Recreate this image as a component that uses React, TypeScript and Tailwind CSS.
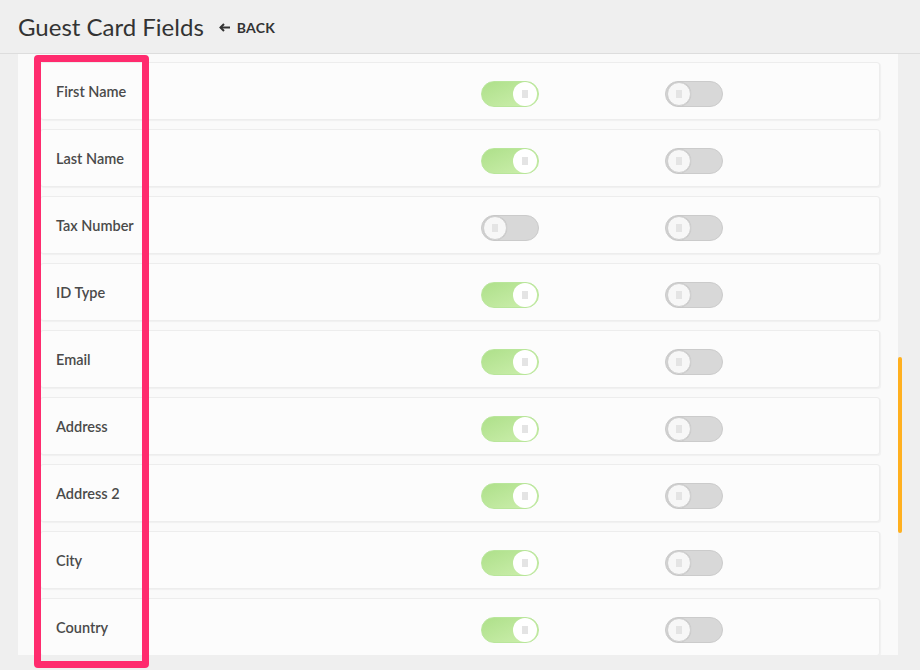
import React from 'react';

interface FieldRow {
  label: string;
  shown: boolean;
  required: boolean;
}

const fields: FieldRow[] = [
  { label: 'First Name', shown: true, required: false },
  { label: 'Last Name', shown: true, required: false },
  { label: 'Tax Number', shown: false, required: false },
  { label: 'ID Type', shown: true, required: false },
  { label: 'Email', shown: true, required: false },
  { label: 'Address', shown: true, required: false },
  { label: 'Address 2', shown: true, required: false },
  { label: 'City', shown: true, required: false },
  { label: 'Country', shown: true, required: false },
];

const Toggle: React.FC<{ on: boolean }> = ({ on }) => {
  return (
    <div
      className={
        on
          ? 'mt-[5px] flex h-[26px] w-[58px] items-center justify-end rounded-full border border-[#b9e69b] bg-gradient-to-br from-[#aee08a] to-[#cdefae] px-px'
          : 'mt-[5px] flex h-[26px] w-[58px] items-center justify-start rounded-full border border-[#cbcbcb] bg-[#d8d8d8] px-px'
      }
    >
      <div
        className={
          on
            ? 'flex h-[24px] w-[24px] items-center justify-center rounded-full bg-white'
            : 'flex h-[24px] w-[24px] items-center justify-center rounded-full border border-[#d0d0d0] bg-[#f7f7f7] shadow-[0_0_1px_rgba(0,0,0,0.15)]'
        }
      >
        <div className="h-[8px] w-[6px] bg-[#e4e4e4]" />
      </div>
    </div>
  );
};

export default function App() {
  return (
    <div
      className="relative h-[670px] w-[920px] overflow-hidden bg-[#efefef] text-[#333]"
      style={{ fontFamily: 'Lato, "Open Sans", sans-serif' }}
    >
      <header className="flex h-[54px] items-center gap-[15px] border-b border-[#dddddd] px-[18px]">
        <h1 className="text-[24px] leading-none text-[#333]">Guest Card Fields</h1>
        <button className="mt-[2px] flex items-center gap-[7px] text-[14px] font-bold tracking-[0.2px] text-[#333]">
          <svg width="11" height="9" viewBox="0 0 11 9" fill="none">
            <path d="M5 1 L1.5 4.5 L5 8" stroke="#333" strokeWidth="2" />
            <path d="M1.5 4.5 H11" stroke="#333" strokeWidth="2" />
          </svg>
          BACK
        </button>
      </header>

      <div className="flex">
        <div className="ml-[18px] flex h-[601px] w-[880px] flex-col gap-[9px] overflow-hidden bg-[#fafafa] pl-[22px] pr-[18px] pt-[8px]">
          {fields.map((f) => (
            <div
              key={f.label}
              className="grid h-[58px] shrink-0 grid-cols-[425px_184px_1fr] items-center rounded-[3px] border border-[#ededed] bg-[#fcfcfc] pl-[15px] shadow-[1px_1px_1px_rgba(0,0,0,0.04)]"
            >
              <span className="mt-[1px] text-[14.5px] font-semibold text-[#4a4a4a]">{f.label}</span>
              <Toggle on={f.shown} />
              <Toggle on={f.required} />
            </div>
          ))}
        </div>
        <div className="w-[22px]">
          <div className="mt-[303px] h-[176px] w-[4px] rounded-full bg-[#ffb01f]" />
        </div>
      </div>

      {/* annotation highlight */}
      <div className="absolute left-[34px] top-[55px] h-[613px] w-[115px] rounded-[4px] border-[7px] border-[#ff2b6e]" />
    </div>
  );
}
